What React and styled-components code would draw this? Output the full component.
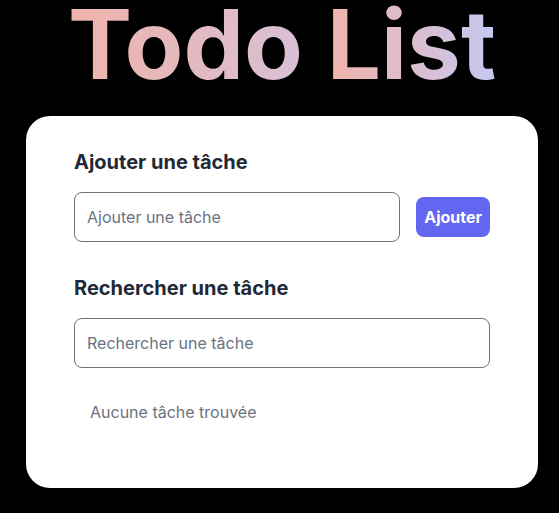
import React, { useState } from "react";
import styled, { createGlobalStyle } from "styled-components";

const GlobalStyle = createGlobalStyle`
  html, body {
    margin: 0;
    padding: 0;
    background: #000;
    font-family: Inter, "Noto Sans", sans-serif;
  }
  * {
    box-sizing: border-box;
  }
`;

const Page = styled.div`
  display: flex;
  flex-direction: column;
  align-items: center;
  padding-left: 5px;
`;

const Title = styled.h1`
  margin: 0 0 28px;
  font-size: 96px;
  line-height: 88px;
  font-weight: 700;
  display: flex;
  gap: 0.25em;
`;

const Word = styled.span`
  background: linear-gradient(90deg, #f0b3a9, ${(p) => p.$end});
  -webkit-background-clip: text;
  background-clip: text;
  color: transparent;
`;

const Card = styled.div`
  width: 512px;
  background: #fff;
  border-radius: 24px;
  padding: 32px 48px 48px;
`;

const Section = styled.section`
  margin-bottom: ${(p) => p.$gap || 0}px;
`;

const Heading = styled.h2`
  margin: 0 0 16px;
  font-size: 20px;
  line-height: 28px;
  font-weight: 700;
  color: #1f2937;
`;

const Row = styled.div`
  display: flex;
  align-items: center;
  gap: 16px;
`;

const Input = styled.input`
  flex: 1;
  min-width: 0;
  height: 50px;
  padding: 12px;
  border: 1px solid #6b7280;
  border-radius: 8px;
  font-family: inherit;
  font-size: 16px;
  color: #1f2937;
  outline: none;

  &::placeholder {
    color: #6b7280;
  }
`;

const Button = styled.button`
  height: 40px;
  padding: 0 8px;
  border: none;
  border-radius: 8px;
  background: #6366f1;
  color: #fff;
  font-family: inherit;
  font-size: 16px;
  font-weight: 700;
  cursor: pointer;
`;

const Empty = styled.p`
  margin: 16px 0 0;
  padding: 16px;
  font-size: 16px;
  line-height: 24px;
  color: #6b7280;
`;

const App = () => {
  const [task, setTask] = useState("");
  const [search, setSearch] = useState("");

  return (
    <Page>
      <GlobalStyle />
      <Title>
        <Word $end="#d8c0d6">Todo</Word>
        <Word $end="#c6c8f2">List</Word>
      </Title>
      <Card>
        <Section $gap={32}>
          <Heading>Ajouter une tâche</Heading>
          <Row>
            <Input placeholder="Ajouter une tâche" value={task} onChange={(e) => setTask(e.target.value)} />
            <Button type="button">Ajouter</Button>
          </Row>
        </Section>
        <Section>
          <Heading>Rechercher une tâche</Heading>
          <Row>
            <Input placeholder="Rechercher une tâche" value={search} onChange={(e) => setSearch(e.target.value)} />
          </Row>
          <Empty>Aucune tâche trouvée</Empty>
        </Section>
      </Card>
    </Page>
  );
};

export default App;
